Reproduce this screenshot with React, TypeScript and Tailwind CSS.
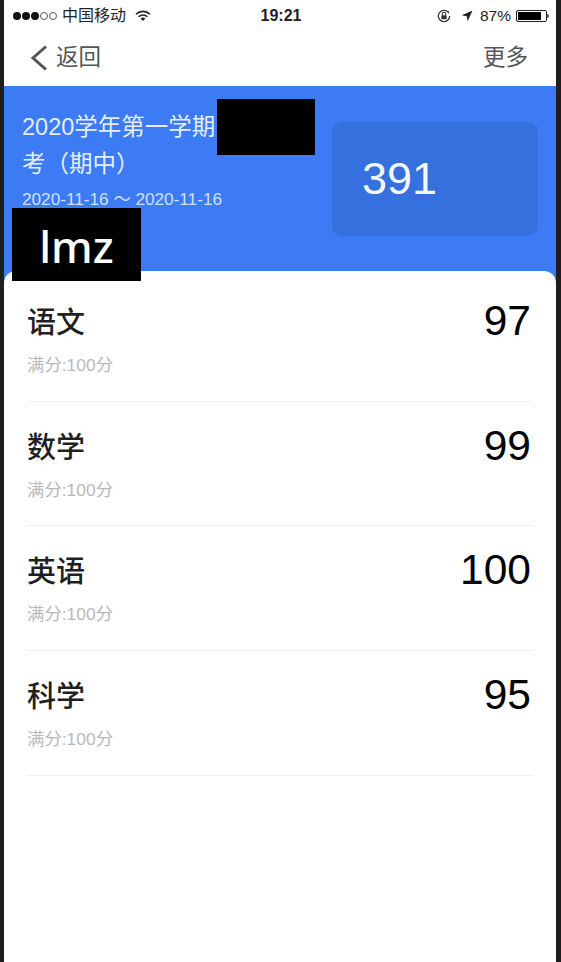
const sans = 'font-["Liberation_Sans","Noto_Sans_CJK_SC",sans-serif]';

const subjects = [
  { name: '语文', score: 97 },
  { name: '数学', score: 99 },
  { name: '英语', score: 100 },
  { name: '科学', score: 95 },
];

function StatusBar() {
  return (
    <div className="h-[29px] flex items-center justify-between pl-[9px] pr-[7px] text-[16px] leading-none text-[#222]">
      <div className="flex items-center w-[200px]">
        <div className="flex items-center gap-[1px]">
          <span className="w-[8px] h-[8px] rounded-full bg-[#111]" />
          <span className="w-[8px] h-[8px] rounded-full bg-[#111]" />
          <span className="w-[8px] h-[8px] rounded-full bg-[#111]" />
          <span className="w-[8px] h-[8px] rounded-full border border-[#555]" />
          <span className="w-[8px] h-[8px] rounded-full border border-[#555]" />
        </div>
        <span className="ml-[5px]">中国移动</span>
        <svg className="ml-[9px]" width="16" height="12" viewBox="0 0 16 12">
          <path d="M1 4.2a10 10 0 0 1 14 0" fill="none" stroke="#222" strokeWidth="1.6" />
          <path d="M3.6 6.8a6.3 6.3 0 0 1 8.8 0" fill="none" stroke="#222" strokeWidth="1.6" />
          <path d="M5.6 8.6a3.4 3.4 0 0 1 4.8 0L8 11z" fill="#222" />
        </svg>
      </div>
      <span className="font-bold">19:21</span>
      <div className="flex items-center justify-end w-[200px]">
        <svg width="16" height="16" viewBox="0 0 15 15">
          <path d="M12.8 7.5a5.3 5.3 0 1 1-1.6-3.8" fill="none" stroke="#333" strokeWidth="1.2" />
          <path d="M10 2.6l2.4.6-.6 2.4z" fill="#333" />
          <rect x="5" y="6.8" width="5" height="3.8" rx=".6" fill="#333" />
          <path d="M5.9 6.8V5.6a1.6 1.6 0 0 1 3.2 0v1.2" fill="none" stroke="#333" strokeWidth="1" />
        </svg>
        <svg className="ml-[9px]" width="12" height="12" viewBox="0 0 12 12">
          <path d="M11.5.5L.8 5.3l4.9 1 1 4.9z" fill="#222" />
        </svg>
        <span className="ml-[7px] text-[15.5px]">87%</span>
        <div className="ml-[5px] flex items-center">
          <div className="w-[31px] h-[12px] rounded-[2px] border border-[#222] p-[1px]">
            <div className="h-full w-[87%] bg-black" />
          </div>
          <span className="w-[2px] h-[4px] bg-[#555] rounded-r-sm" />
        </div>
      </div>
    </div>
  );
}

function NavBar() {
  return (
    <div className="h-[56px] flex items-center justify-between pl-[23px] pr-[28px] text-[#555]">
      <div className="flex items-center">
        <svg width="24" height="30" viewBox="0 0 24 30">
          <path d="M19 3.5L6 15l13 11.5" fill="none" stroke="#555" strokeWidth="3" />
        </svg>
        <span className="ml-[5px] text-[22.5px] leading-none">返回</span>
      </div>
      <span className="text-[22.5px] leading-none">更多</span>
    </div>
  );
}

function Summary() {
  return (
    <div className="relative h-[197px] bg-[#3c7bf4] flex justify-between pl-[18px] pr-[18px] pt-[23px] text-white">
      <div className="w-[296px]">
        <div className="text-[23.5px] leading-[37px] text-[#e4eefe]">2020学年第一学期<br />考（期中）</div>
        <div className="mt-[5px] text-[17.2px] leading-[22px] text-[#cfe0fd]">2020-11-16 ～ 2020-11-16</div>
      </div>
      <div className="w-[206px] h-[114px] mt-[13px] rounded-[10px] bg-[#3570de] flex items-center pl-[30px] pb-[2px] text-[45px] leading-none text-[#f2f6ff]">
        391
      </div>
      <div className="absolute left-[213px] top-[13px] w-[98px] h-[56px] bg-black" />
      <div className="absolute left-[8px] top-[122px] w-[129px] h-[73px] bg-black z-10 flex items-center justify-center text-[44px] leading-none font-medium font-['Noto_Sans',sans-serif] text-white pt-[3px]">
        lmz
      </div>
    </div>
  );
}

function SubjectRow({ name, score }: { name: string; score: number }) {
  return (
    <div className="h-[124.67px] border-b border-[#f1f1f1] flex justify-between">
      <div>
        <div className="mt-[29px] text-[29px] leading-[34px] text-[#1f1f1f] font-medium">{name}</div>
        <div className="mt-[15px] text-[17.4px] leading-[20px] text-[#b9b9b9]">满分:100分</div>
      </div>
      <div className="mt-[18px] text-[42.5px] leading-[52px] text-black pr-[2px]">{score}</div>
    </div>
  );
}

export default function App() {
  return (
    <div className={`h-[962px] w-[561px] overflow-hidden bg-[#1e1e1e] pl-[4px] pr-[5px] ${sans}`}>
      <div className="h-full bg-white pt-[1px] flex flex-col">
        <StatusBar />
        <NavBar />
        <Summary />
        <div className="relative -mt-[12px] flex-1 rounded-t-[12px] bg-white px-[23px] pt-[6px]">
          {subjects.map((s) => (
            <SubjectRow key={s.name} name={s.name} score={s.score} />
          ))}
        </div>
      </div>
    </div>
  );
}
